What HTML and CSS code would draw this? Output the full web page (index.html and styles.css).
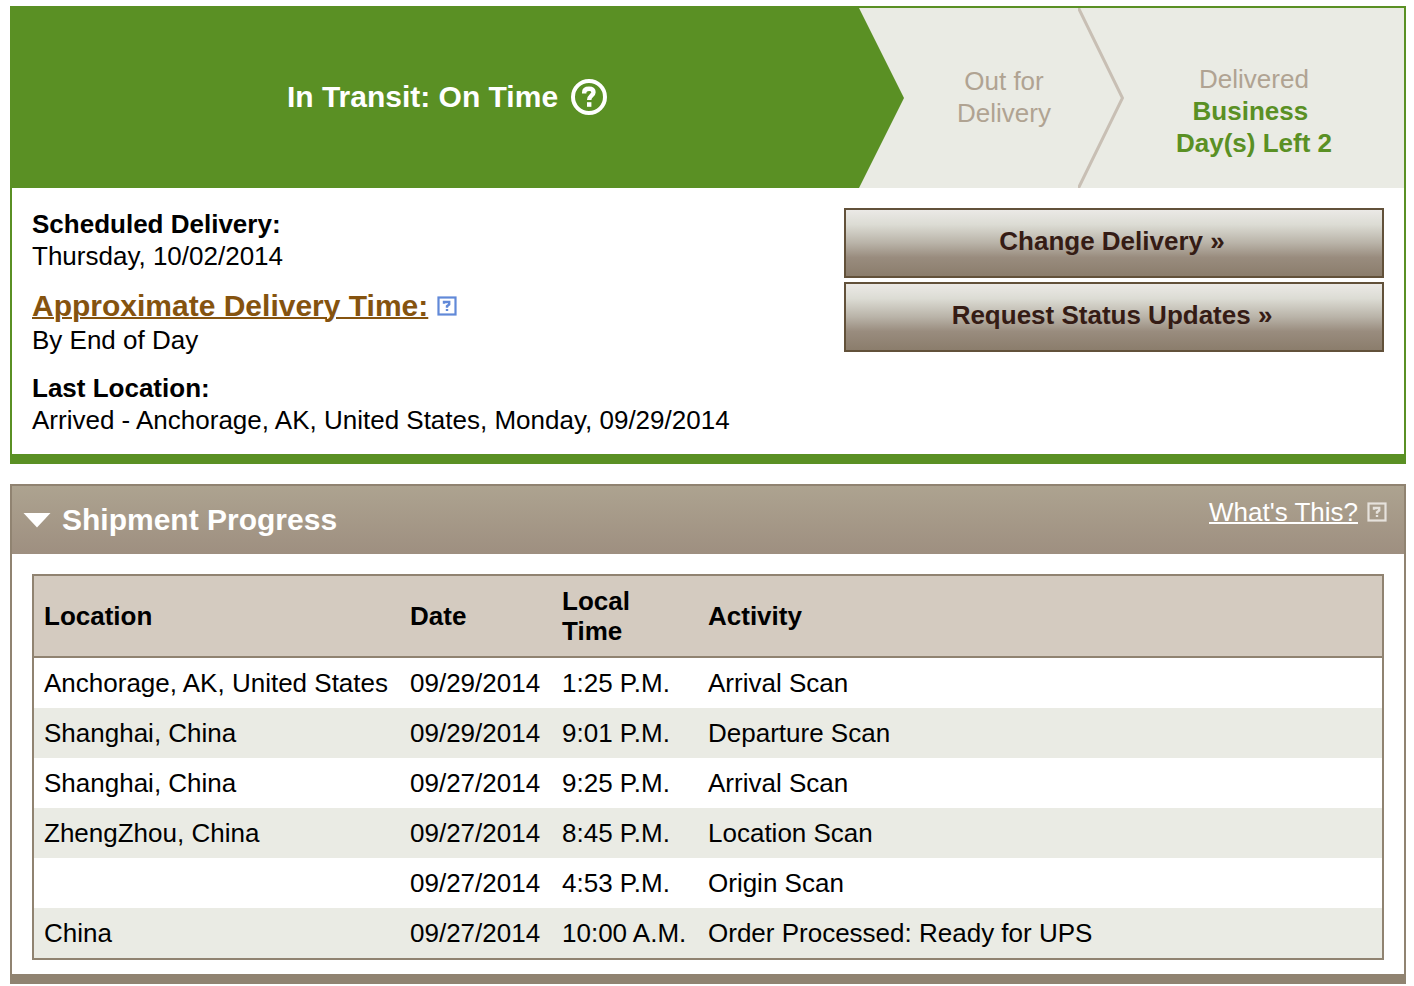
FILE: index.html
```html
<!DOCTYPE html>
<html lang="en">
<head>
<meta charset="utf-8">
<title>Shipment Tracking</title>
<link rel="stylesheet" href="styles.css">
</head>
<body>
<main class="page">
  <section class="status">
    <ol class="steps">
      <li class="step step-current">
        <span>In Transit: On Time</span>
        <button class="help-round" type="button" aria-label="Status help">
          <svg width="36" height="36" viewBox="0 0 36 36" aria-hidden="true">
            <circle cx="18" cy="18" r="16" fill="none" stroke="#fff" stroke-width="4"/>
            <path d="M13.200 14.500V13.500C13.200 10.800 15 9.800 18 9.800C21 9.800 22.500 11 22.500 13.200C22.500 16.500 18.200 16.300 18.200 21" fill="none" stroke="#fff" stroke-width="4.400"/>
            <rect x="16" y="23.200" width="4.400" height="4.600" fill="#fff"/>
          </svg>
        </button>
      </li>
      <li class="step step-next">
        <span>Out for<br>Delivery</span>
        <svg class="chevron" width="46" height="180" viewBox="0 0 46 180" preserveAspectRatio="none" aria-hidden="true">
          <path d="M0 -1L44.500 90L0 181" fill="none" stroke="#c8bfb4" stroke-width="3"/>
        </svg>
      </li>
      <li class="step step-last">
        <span>Delivered<br><strong>Business&nbsp;<br>Day(s) Left 2</strong></span>
      </li>
    </ol>
    <div class="summary">
      <dl class="facts">
        <div>
          <dt>Scheduled Delivery:</dt>
          <dd>Thursday, 10/02/2014</dd>
        </div>
        <div>
          <dt class="approx">
            <a href="#time">Approximate Delivery Time:</a>
            <svg class="help-blue" width="20" height="20" viewBox="0 0 20 20" aria-hidden="true">
              <rect x="1.500" y="1.500" width="17" height="17" fill="none" stroke="currentColor" stroke-width="2.200"/>
              <path d="M7 7.800V6H12.200V8.500L10 10.200V11.800" fill="none" stroke="currentColor" stroke-width="2.400"/>
              <rect x="8.800" y="13" width="2.400" height="2" fill="currentColor"/>
            </svg>
          </dt>
          <dd>By End of Day</dd>
        </div>
        <div>
          <dt>Last Location:</dt>
          <dd>Arrived - Anchorage, AK, United States, Monday, 09/29/2014</dd>
        </div>
      </dl>
      <div class="actions">
        <button class="action" type="button">Change Delivery »</button>
        <button class="action" type="button">Request Status Updates »</button>
      </div>
    </div>
  </section>

  <section class="progress">
    <header class="progress-head">
      <h2>
        <button class="toggle" type="button" aria-expanded="true">
          <svg width="28" height="16" viewBox="0 0 28 16" aria-hidden="true">
            <path d="M0.500 1H27.500L14 15.500Z" fill="#fff"/>
          </svg>
          <span>Shipment Progress</span>
        </button>
      </h2>
      <div class="whats">
        <a href="#help">What's This?</a>
        <svg class="help-pale" width="20" height="20" viewBox="0 0 20 20" aria-hidden="true">
          <rect x="1.500" y="1.500" width="17" height="17" fill="none" stroke="currentColor" stroke-width="2.200"/>
          <path d="M7 7.800V6H12.200V8.500L10 10.200V11.800" fill="none" stroke="currentColor" stroke-width="2.400"/>
          <rect x="8.800" y="13" width="2.400" height="2" fill="currentColor"/>
        </svg>
      </div>
    </header>
    <div class="progress-body">
      <table class="scans">
        <colgroup>
          <col class="col-location">
          <col class="col-date">
          <col class="col-time">
          <col>
        </colgroup>
        <thead>
          <tr><th scope="col">Location</th><th scope="col">Date</th><th scope="col">Local<br>Time</th><th scope="col">Activity</th></tr>
        </thead>
        <tbody>
          <tr><td>Anchorage, AK, United States</td><td>09/29/2014</td><td>1:25 P.M.</td><td>Arrival Scan</td></tr>
          <tr><td>Shanghai, China</td><td>09/29/2014</td><td>9:01 P.M.</td><td>Departure Scan</td></tr>
          <tr><td>Shanghai, China</td><td>09/27/2014</td><td>9:25 P.M.</td><td>Arrival Scan</td></tr>
          <tr><td>ZhengZhou, China</td><td>09/27/2014</td><td>8:45 P.M.</td><td>Location Scan</td></tr>
          <tr><td></td><td>09/27/2014</td><td>4:53 P.M.</td><td>Origin Scan</td></tr>
          <tr><td>China</td><td>09/27/2014</td><td>10:00 A.M.</td><td>Order Processed: Ready for UPS</td></tr>
        </tbody>
      </table>
    </div>
  </section>
</main>
</body>
</html>
```
FILE: styles.css
```css
* {
  box-sizing: border-box;
}

body {
  margin: 0;
  background: #fff;
  color: #000;
  font-family: "Liberation Sans", Arial, Helvetica, sans-serif;
  font-size: 26px;
  line-height: 32px;
}

button {
  font: inherit;
  cursor: pointer;
}

svg {
  display: block;
  flex: none;
}

.page {
  display: flex;
  flex-direction: column;
  gap: 20px;
  padding: 6px 8px 2px 10px;
}

/* Delivery status */

.status {
  border: 2px solid #5a9024;
  border-bottom-width: 10px;
}

.steps {
  display: grid;
  grid-template-columns: 1fr 220px 280px;
  min-height: 180px;
  margin: 0;
  padding: 0;
  list-style: none;
  background: #eaebe4;
}

.step {
  display: flex;
  align-items: center;
  justify-content: center;
  padding: 0 20px 2px 0;
  color: #b0a392;
  text-align: center;
}

.step-current {
  gap: 13px;
  padding-right: 22px;
  background: #5a9024;
  clip-path: polygon(0 0, calc(100% - 45px) 0, 100% 50%, calc(100% - 45px) 100%, 0 100%);
  color: #fff;
  font-size: 30px;
  font-weight: bold;
}

.step-next {
  position: relative;
}

.chevron {
  position: absolute;
  top: 0;
  right: 0;
  height: 100%;
}

.step-last {
  padding-top: 28px;
}

.step-last strong {
  color: #5a9024;
}

.help-round {
  padding: 0;
  border: 0;
  background: none;
}

.summary {
  display: flex;
  justify-content: space-between;
  gap: 20px;
  padding: 20px 20px 18px;
}

.facts {
  display: flex;
  flex-direction: column;
  gap: 16px;
  margin: 0;
}

.facts dt {
  font-weight: bold;
}

.facts dd {
  margin: 0;
}

.facts .approx {
  display: flex;
  align-items: center;
  gap: 9px;
  font-size: 30px;
  line-height: 36px;
}

.approx a {
  color: #85530f;
  text-decoration-thickness: 2px;
}

.help-blue {
  color: #6189d8;
}

.actions {
  display: flex;
  flex: 0 1 540px;
  flex-direction: column;
  gap: 4px;
}

.action {
  min-height: 70px;
  padding: 0 8px 4px 4px;
  border: 2px solid #62513a;
  border-radius: 0;
  background: linear-gradient(#ebe9e6, #dcdcd4 22%, #b9b3a8 50%, #998c7e 72%, #8b7d6c);
  color: #351c15;
  font-weight: bold;
}

/* Shipment progress */

.progress {
  border: 2px solid #908371;
  border-bottom-width: 10px;
}

.progress-head {
  display: flex;
  align-items: flex-start;
  justify-content: space-between;
  padding: 0 17px 0 11px;
  background: linear-gradient(#ada390, #9e8f80);
  color: #fff;
}

.progress-head h2 {
  margin: 0;
  font-size: 30px;
}

.toggle {
  display: flex;
  align-items: center;
  gap: 11px;
  min-height: 68px;
  padding: 0;
  border: 0;
  background: none;
  color: inherit;
}

.whats {
  display: flex;
  align-items: center;
  gap: 9px;
  padding-top: 10px;
}

.whats a {
  color: inherit;
  text-decoration-thickness: 2px;
}

.help-pale {
  color: #e6e2dc;
}

.progress-body {
  padding: 20px 20px 14px;
}

.scans {
  width: 100%;
  border: 2px solid #908371;
  border-spacing: 0;
  table-layout: fixed;
}

.col-location {
  width: 366px;
}

.col-date {
  width: 152px;
}

.col-time {
  width: 146px;
}

.scans th,
.scans td {
  height: 50px;
  padding: 10px;
  line-height: 30px;
  text-align: left;
  white-space: nowrap;
}

.scans th {
  border-bottom: 2px solid #908371;
  background: #d4cbc0;
}

.scans tbody tr:nth-child(even) {
  background: #eaebe4;
}
```
